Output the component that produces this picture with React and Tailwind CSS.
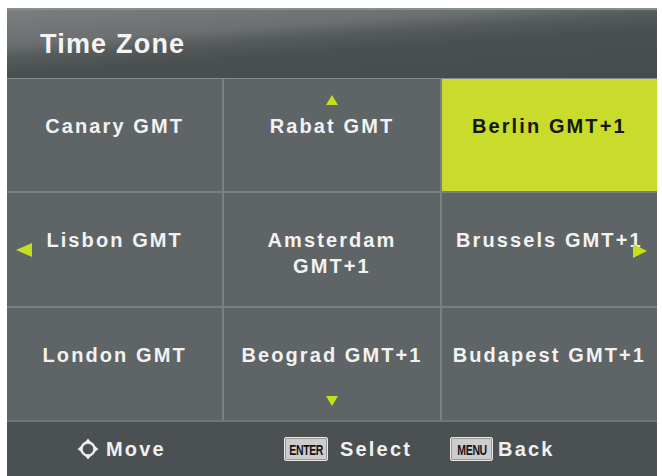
import React from "react";

const cells = [
  ["Canary GMT"],
  ["Rabat GMT"],
  ["Berlin GMT+1"],
  ["Lisbon GMT"],
  ["Amsterdam", "GMT+1"],
  ["Brussels GMT+1"],
  ["London GMT"],
  ["Beograd GMT+1"],
  ["Budapest GMT+1"],
];

function Tri({ dir, className }) {
  const pts = {
    up: "6,0 12,10 0,10",
    down: "0,0 12,0 6,10",
    left: "16,0 16,14 0,7",
    right: "0,0 14,7 0,14",
  }[dir];
  const vb = dir === "up" || dir === "down" ? "0 0 12 10" : dir === "left" ? "0 0 16 14" : "0 0 14 14";
  return (
    <svg viewBox={vb} className={className}>
      <polygon points={pts} fill="#c4e01c" />
    </svg>
  );
}

function MoveIcon() {
  return (
    <svg viewBox="0 0 24 24" className="w-[24px] h-[24px]">
      <circle cx="12" cy="12" r="6.5" fill="none" stroke="#eeeeee" strokeWidth="2.4" />
      <polygon points="12,1.5 15.5,6 8.5,6" fill="#eeeeee" />
      <polygon points="12,22.5 15.5,18 8.5,18" fill="#eeeeee" />
      <polygon points="1.5,12 6,8.5 6,15.5" fill="#eeeeee" />
      <polygon points="22.5,12 18,8.5 18,15.5" fill="#eeeeee" />
      <circle cx="12" cy="12" r="4" fill="#4b5052" />
    </svg>
  );
}

function Badge({ label, w }) {
  return (
    <div
      className={`${w} h-[24px] bg-[#cdcdcd] border border-[#e6e6e6] rounded-[2px] flex items-center justify-center shadow-[inset_0_0_0_1px_#9a9a9a]`}
    >
      <span className="inline-block scale-x-[0.7] text-[15px] leading-none font-bold text-[#151515] tracking-[-0.5px]">
        {label}
      </span>
    </div>
  );
}

export default function App() {
  return (
    <div className="w-[662px] h-[476px] bg-white pl-[7px] pt-[8px] pr-[5px] overflow-hidden font-['Liberation_Sans',Arial,sans-serif]">
      <div className="w-[650px] h-[468px] flex flex-col bg-[#5f6466]">
        {/* Header */}
        <div className="h-[70px] shrink-0 flex items-center pl-[33px] border-t-2 border-[#8a8e8f] bg-[linear-gradient(176deg,#7a7e7f_0%,#6c7071_30%,#565b5c_42%,#4a4f50_56%,#464b4c_100%)]">
          <span className="text-[27px] font-bold text-[#f4f4f4] tracking-[1.2px] leading-none">
            Time Zone
          </span>
        </div>

        {/* Grid */}
        <div className="h-[342px] shrink-0 grid grid-cols-3 grid-rows-3 gap-[2px] bg-[#7a7f80] border-t border-[#858a8b]">
          {cells.map((lines, i) => {
            const active = i === 2;
            return (
              <div
                key={i}
                className={`relative flex flex-col items-center pt-[34px] text-center leading-[26px] text-[20px] font-bold tracking-[2.1px] ${
                  active ? "bg-[#c9dc2b] text-[#15170d]" : "bg-[#5f6466] text-[#f2f2f2]"
                }`}
              >
                {lines.map((l) => (
                  <span key={l} className="whitespace-nowrap">
                    {l}
                  </span>
                ))}
                {i === 1 && (
                  <Tri dir="up" className="absolute top-[16px] left-1/2 -translate-x-1/2 w-[12px] h-[10px]" />
                )}
                {i === 7 && (
                  <Tri dir="down" className="absolute bottom-[14px] left-1/2 -translate-x-1/2 w-[12px] h-[10px]" />
                )}
                {i === 3 && (
                  <Tri dir="left" className="absolute top-[50px] left-[9px] w-[16px] h-[14px]" />
                )}
                {i === 5 && (
                  <Tri dir="right" className="absolute top-[51px] right-[10px] w-[14px] h-[14px]" />
                )}
              </div>
            );
          })}
        </div>

        {/* Footer */}
        <div className="h-[56px] shrink-0 bg-[#4b5052] border-t-2 border-[#6f7475] flex items-center text-[20px] font-bold text-[#f0f0f0] tracking-[2.2px]">
          <div className="flex items-center ml-[69px] gap-[6px]">
            <MoveIcon />
            <span>Move</span>
          </div>
          <div className="flex items-center ml-[118px] gap-[12px]">
            <Badge label="ENTER" w="w-[44px]" />
            <span>Select</span>
          </div>
          <div className="flex items-center ml-[38px] gap-[5px]">
            <Badge label="MENU" w="w-[43px]" />
            <span>Back</span>
          </div>
        </div>
      </div>
    </div>
  );
}
